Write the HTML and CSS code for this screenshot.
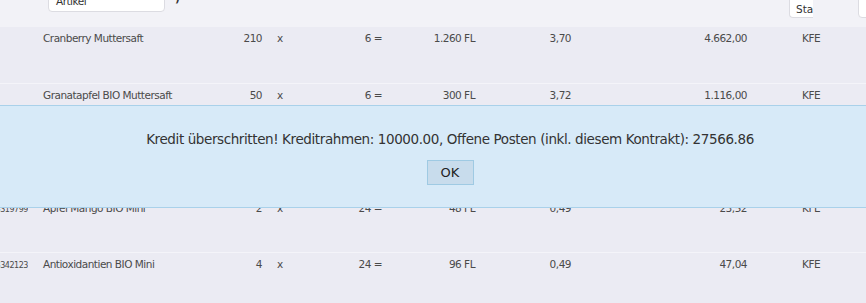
FILE: index.html
```html
<!DOCTYPE html>
<html lang="de">
  <head>
    <meta charset="UTF-8" />
    <title>Kontrakt Positionen</title>
    <link rel="stylesheet" href="styles.css">
  </head>
  <body>
    <div class="table">
      <!-- Column header with filter inputs -->
      <div class="row head">
        <div class="cell c-nr">Art.-Nr.</div>
        <div class="cell c-name">
          <span class="filter">Artikel</span>
          <span class="sort">)</span>
        </div>
        <div class="cell c-menge">Menge</div>
        <div class="cell c-x">K</div>
        <div class="cell c-vp left">Verpack</div>
        <div class="cell c-ges">Gesamt</div>
        <div class="cell c-preis">K-Preis</div>
        <div class="cell c-wert"><span class="rabatt">Rabatt</span>Wert</div>
        <div class="cell c-einh">
          <span class="filter small">Status</span>
          <span class="filter tiny"></span>
        </div>
      </div>

      <div class="row">
        <div class="cell c-nr"></div>
        <div class="cell c-name">Cranberry Muttersaft</div>
        <div class="cell c-menge">210</div>
        <div class="cell c-x">x</div>
        <div class="cell c-vp">6 =</div>
        <div class="cell c-ges">1.260 FL</div>
        <div class="cell c-preis">3,70</div>
        <div class="cell c-wert">4.662,00</div>
        <div class="cell c-einh">KFE</div>
      </div>

      <div class="row">
        <div class="cell c-nr"></div>
        <div class="cell c-name">Granatapfel BIO Muttersaft</div>
        <div class="cell c-menge">50</div>
        <div class="cell c-x">x</div>
        <div class="cell c-vp">6 =</div>
        <div class="cell c-ges">300 FL</div>
        <div class="cell c-preis">3,72</div>
        <div class="cell c-wert">1.116,00</div>
        <div class="cell c-einh">KFE</div>
      </div>

      <!-- row hidden behind the dialog -->
      <div class="row">
        <div class="cell c-nr"></div>
        <div class="cell c-name"></div>
      </div>

      <div class="row">
        <div class="cell c-nr">4003319799</div>
        <div class="cell c-name">Apfel Mango BIO Mini</div>
        <div class="cell c-menge">2</div>
        <div class="cell c-x">x</div>
        <div class="cell c-vp">24 =</div>
        <div class="cell c-ges">48 FL</div>
        <div class="cell c-preis">0,49</div>
        <div class="cell c-wert">23,52</div>
        <div class="cell c-einh">KFE</div>
      </div>

      <div class="row">
        <div class="cell c-nr">4003342123</div>
        <div class="cell c-name">Antioxidantien BIO Mini</div>
        <div class="cell c-menge">4</div>
        <div class="cell c-x">x</div>
        <div class="cell c-vp">24 =</div>
        <div class="cell c-ges">96 FL</div>
        <div class="cell c-preis">0,49</div>
        <div class="cell c-wert">47,04</div>
        <div class="cell c-einh">KFE</div>
      </div>
    </div>

    <!-- Credit limit warning -->
    <div class="dialog">
      <p>Kredit überschritten! Kreditrahmen: 10000.00, Offene Posten (inkl. diesem Kontrakt): 27566.86</p>
      <button type="button">OK</button>
    </div>
  </body>
</html>
```

FILE: styles.css
```css
body {
  margin: 0;
  background-color: #ebebf3;
  font-family: "DejaVu Sans", Verdana, sans-serif;
  font-size: 10.5px;
  letter-spacing: -0.5px;
  color: #4a4a4a;
  overflow: hidden;
  height: 303px;
}

.table {
  width: 866px;
}

.row {
  display: flex;
  height: 56.5px;
  box-sizing: border-box;
  padding-top: 5px;
  line-height: 13px;
  border-bottom: 1px solid #f4f4f9;
}

.cell {
  flex: none;
  white-space: nowrap;
  box-sizing: border-box;
}

.c-nr {
  width: 28px;
  display: flex;
  justify-content: flex-end;
  overflow: hidden;
  font-size: 8px;
  letter-spacing: -0.45px;
  padding-top: 1px;
}

.c-name {
  width: 192px;
  padding-left: 15px;
}

.c-menge {
  width: 42px;
  text-align: right;
}

.c-x {
  width: 38px;
  padding-left: 15px;
}

.c-vp {
  width: 82px;
  text-align: right;
}

.c-ges {
  width: 93px;
  text-align: right;
}

.c-preis {
  width: 96px;
  text-align: right;
}

.c-wert {
  width: 176px;
  text-align: right;
}

.c-einh {
  padding-left: 55px;
  display: flex;
}

/* header: only the lower edge is visible */
.head {
  margin-top: -13px;
  height: 40px;
  padding-top: 0;
  background-color: #f2f2f7;
  border-bottom: none;
  color: #666;
}

.head .cell {
  padding-top: 1px;
}

.head .c-name {
  display: flex;
  align-items: flex-start;
  padding-left: 20px;
  padding-top: 0;
}

.head .c-vp.left {
  text-align: left;
  padding-left: 10px;
}

.head .c-ges {
  text-align: left;
  padding-left: 78px;
}

.head .c-preis {
  text-align: left;
  padding-left: 65px;
}

.head .c-wert {
  text-align: left;
  padding-left: 55px;
}

.rabatt {
  margin-right: 70px;
}

.filter {
  display: inline-block;
  width: 117px;
  height: 25px;
  box-sizing: border-box;
  padding: 7px 0 0 7px;
  background: #fff;
  border: 1px solid #dcdce2;
  border-radius: 4px;
  color: #333;
}

.sort {
  margin: 5px 0 0 10px;
  font-weight: bold;
  color: #333;
}

.head .c-einh {
  padding-left: 42px;
  padding-top: 0;
}

.filter.small {
  width: 24px;
  height: 31px;
  padding: 15px 0 0 6px;
  overflow: hidden;
  border-right: none;
  border-radius: 4px 0 0 4px;
  letter-spacing: 0;
}

.filter.tiny {
  width: 20px;
  height: 31px;
  margin-left: 45px;
}

.dialog {
  position: absolute;
  top: 105px;
  left: 0;
  right: 0;
  height: 103px;
  box-sizing: border-box;
  padding: 25px 0 0 34px;
  background-color: #d7eaf8;
  border-top: 1px solid #a9d1ea;
  border-bottom: 1px solid #a9d1ea;
  text-align: center;
  color: #333;
}

.dialog p {
  margin: 0 0 13px;
  font-size: 13.5px;
  letter-spacing: -0.4px;
  line-height: 16px;
}

.dialog button {
  width: 47px;
  height: 25px;
  padding: 0;
  font-family: "DejaVu Sans", Verdana, sans-serif;
  font-size: 13px;
  letter-spacing: 0;
  color: #222;
  background-color: #c8dcec;
  border: 1px solid #9fcae3;
  border-radius: 0;
}
```
